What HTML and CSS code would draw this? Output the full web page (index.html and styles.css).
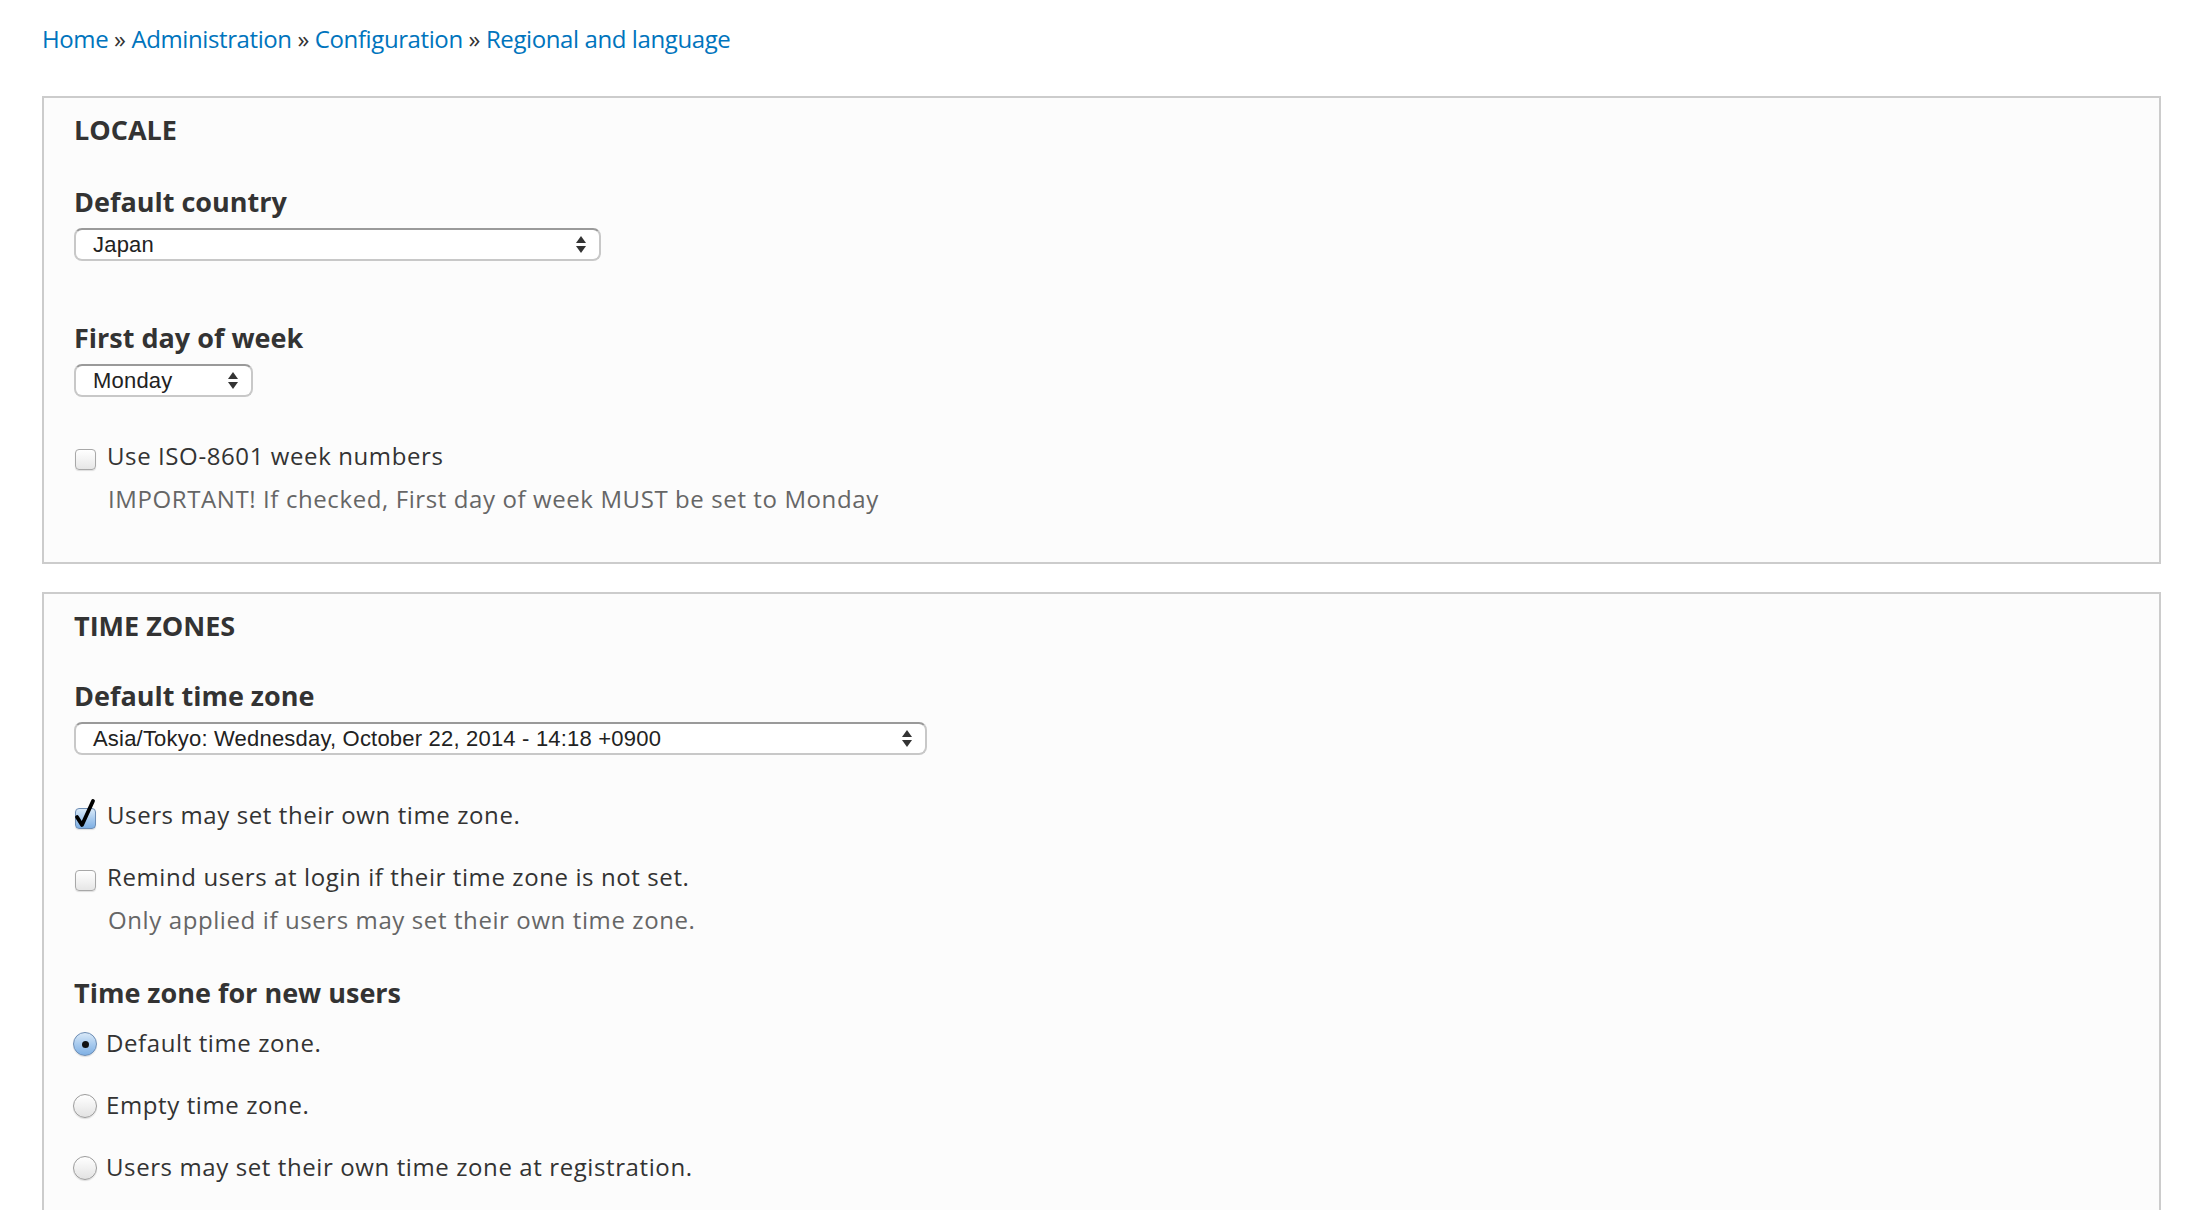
FILE: index.html
```html
<!DOCTYPE html>
<html lang="en">
<head>
<meta charset="utf-8">
<title>Regional settings</title>
<link rel="stylesheet" href="styles.css">
</head>
<body>
<div class="page">
  <nav class="breadcrumb">
    <a href="#">Home</a> <span class="sep">»</span> <a href="#">Administration</a> <span class="sep">»</span> <a href="#">Configuration</a> <span class="sep">»</span> <a href="#">Regional and language</a>
  </nav>

  <section class="group group-locale">
    <h2 class="legend">LOCALE</h2>

    <div class="item item-first">
      <div class="label">Default country</div>
      <div class="select select-country">
        <span class="select-text">Japan</span>
        <svg class="arrows" width="10" height="17" viewBox="0 0 10 17"><polygon points="0,7 5,0 10,7" /><polygon points="0,10 10,10 5,17" /></svg>
      </div>
    </div>

    <div class="item item-after-select">
      <div class="label">First day of week</div>
      <div class="select select-day">
        <span class="select-text">Monday</span>
        <svg class="arrows" width="10" height="17" viewBox="0 0 10 17"><polygon points="0,7 5,0 10,7" /><polygon points="0,10 10,10 5,17" /></svg>
      </div>
    </div>

    <div class="check-item check-after-select">
      <div class="option">
        <span class="checkbox"></span>
        <span class="option-label">Use ISO-8601 week numbers</span>
      </div>
      <div class="description">IMPORTANT! If checked, First day of week MUST be set to Monday</div>
    </div>
  </section>

  <section class="group group-tz">
    <h2 class="legend">TIME ZONES</h2>

    <div class="item item-first">
      <div class="label">Default time zone</div>
      <div class="select select-tz">
        <span class="select-text">Asia/Tokyo: Wednesday, October 22, 2014 - 14:18 +0900</span>
        <svg class="arrows" width="10" height="17" viewBox="0 0 10 17"><polygon points="0,7 5,0 10,7" /><polygon points="0,10 10,10 5,17" /></svg>
      </div>
    </div>

    <div class="check-item check-after-select">
      <div class="option">
        <span class="checkbox checked">
          <svg class="tick" width="24" height="30" viewBox="0 0 24 30"><path d="M3 17 L8 25 L19 1" /></svg>
        </span>
        <span class="option-label">Users may set their own time zone.</span>
      </div>
    </div>

    <div class="check-item check-next">
      <div class="option">
        <span class="checkbox"></span>
        <span class="option-label">Remind users at login if their time zone is not set.</span>
      </div>
      <div class="description">Only applied if users may set their own time zone.</div>
    </div>

    <div class="item item-radios">
      <div class="label">Time zone for new users</div>
      <div class="radio-list">
        <div class="option radio-option">
          <span class="radio selected"></span>
          <span class="option-label">Default time zone.</span>
        </div>
        <div class="option radio-option">
          <span class="radio"></span>
          <span class="option-label">Empty time zone.</span>
        </div>
        <div class="option radio-option">
          <span class="radio"></span>
          <span class="option-label">Users may set their own time zone at registration.</span>
        </div>
      </div>
    </div>
  </section>
</div>
</body>
</html>
```

FILE: styles.css
```css
* { box-sizing: border-box; }

html, body {
  margin: 0;
  padding: 0;
  background: #ffffff;
}

body {
  font-family: "Open Sans", "DejaVu Sans", sans-serif;
  color: #333333;
}

.page {
  padding: 21px 39px 0 42px;
}

.breadcrumb {
  font-size: 24px;
  line-height: 36px;
  height: 36px;
  letter-spacing: -0.4px;
  color: #333333;
}

.breadcrumb a {
  color: #0074bd;
  text-decoration: none;
}

.group {
  border: 2px solid #cccccc;
  background: #fcfcfc;
  padding: 14px 30px 46px 30px;
  margin-top: 39px;
}

.group-tz {
  margin-top: 28px;
  padding-bottom: 80px;
}

.legend {
  margin: 0;
  font-size: 27px;
  line-height: 36px;
  font-weight: 700;
  color: #333333;
}

.label {
  font-size: 27px;
  line-height: 36px;
  font-weight: 700;
  color: #333333;
}

.item-first { margin-top: 36px; }
.item-after-select { margin-top: 59px; }
.check-after-select { margin-top: 41px; }
.check-next { margin-top: 26px; }
.item-radios { margin-top: 38px; }

.group-tz .item-first { margin-top: 34px; }
.group-tz .check-after-select { margin-top: 42px; }

/* select boxes */
.select {
  margin-top: 8px;
  height: 33px;
  border: 2px solid #c8c8c8;
  border-top-color: #9a9a9a;
  border-radius: 8px;
  background: #ffffff;
  display: flex;
  align-items: center;
  justify-content: space-between;
  padding: 0 13px 0 17px;
}

.select-country { width: 527px; }
.select-day { width: 179px; }
.select-tz { width: 853px; }

.select-text {
  font-family: "Liberation Sans", Arial, sans-serif;
  font-size: 22px;
  letter-spacing: 0.2px;
  line-height: 29px;
  color: #222222;
  white-space: nowrap;
}

.arrows {
  flex: none;
  fill: #333333;
}

/* checkbox / radio rows */
.option {
  display: flex;
  align-items: flex-start;
}

.option-label {
  font-size: 24px;
  line-height: 36px;
  letter-spacing: 0.6px;
  color: #333333;
}

.checkbox {
  position: relative;
  flex: none;
  width: 21px;
  height: 21px;
  margin: 11px 11px 0 1px;
  border: 1px solid #a8a8a8;
  border-radius: 4px;
  background: linear-gradient(#ffffff 0%, #f3f3f3 50%, #e6e6e6 100%);
  box-shadow: 0 1px 1px rgba(0, 0, 0, 0.12);
}

.checkbox.checked {
  border-color: #6d8db4;
  background: linear-gradient(#d9e9f8 0%, #a9cbee 50%, #7fb0e4 100%);
}

.tick {
  position: absolute;
  left: -2px;
  top: -9px;
  overflow: visible;
}

.tick path {
  fill: none;
  stroke: #000000;
  stroke-width: 3.8;
  stroke-linecap: round;
  stroke-linejoin: round;
}

.description {
  margin-top: 8px;
  padding-left: 34px;
  font-size: 24px;
  line-height: 34px;
  letter-spacing: 0.6px;
  color: #666666;
}

.radio-list {
  margin-top: 14px;
}

.radio-option + .radio-option {
  margin-top: 26px;
}

.radio {
  flex: none;
  width: 24px;
  height: 24px;
  margin: 7px 9px 0 -1px;
  border: 1px solid #9c9c9c;
  border-radius: 50%;
  background: linear-gradient(#ffffff 0%, #f1f1f1 50%, #e2e2e2 100%);
  box-shadow: 0 1px 1px rgba(0, 0, 0, 0.12);
  display: flex;
  align-items: center;
  justify-content: center;
}

.radio.selected {
  border-color: #6d8db4;
  background: linear-gradient(#d9e9f8 0%, #a9cbee 50%, #7fb0e4 100%);
}

.radio.selected::after {
  content: "";
  width: 7px;
  height: 7px;
  border-radius: 50%;
  background: #111111;
}
```
